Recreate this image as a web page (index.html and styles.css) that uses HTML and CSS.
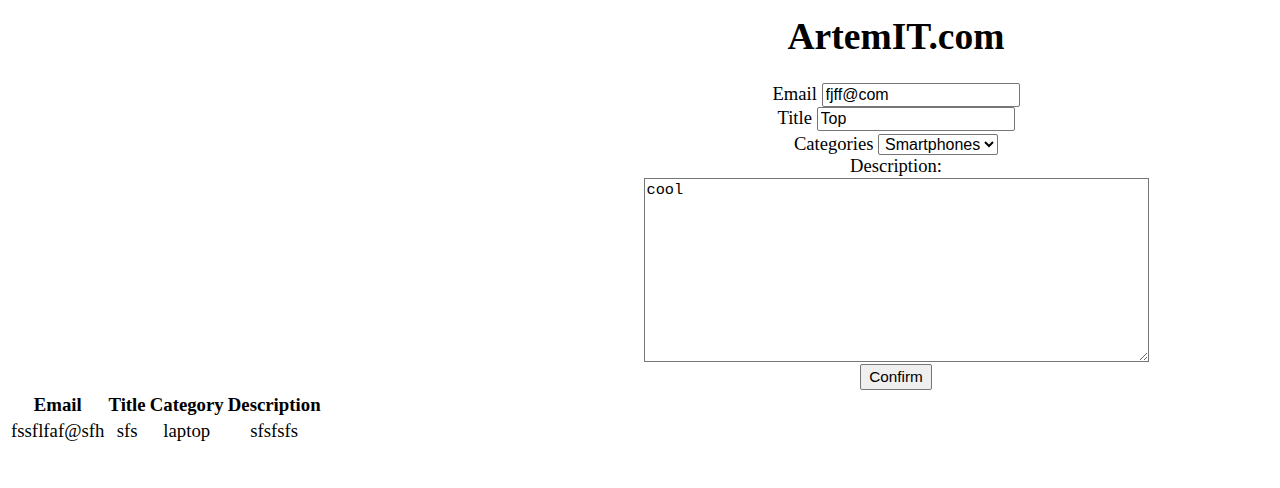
FILE: index.html
```html
<!DOCTYPE html>
<html lang="en">
<head>
  <meta charset="UTF-8">
  <title>ArtemIT.com</title>
  <link rel="stylesheet" href="styles.css">
</head>
<body>

  <div class="form-box">
    <h1>ArtemIT.com</h1>
    <form class="ad-form" onsubmit="return false">
      <div class="row">Email <input type="text" class="field" name="email" value="fjff@com"></div>
      <div class="row">Title <input type="text" class="field" name="title" value="Top"></div>
      <div class="row row-select">Categories <select class="category" name="category">
          <option>Smartphones</option>
          <option>laptop</option>
        </select></div>
      <div class="row">Description:</div>
      <textarea class="description" name="description">cool</textarea>
      <div class="row row-button"><button type="submit" class="confirm">Confirm</button></div>
    </form>
  </div>

  <table class="ads">
    <thead>
      <tr>
        <th>Email</th>
        <th>Title</th>
        <th>Category</th>
        <th>Description</th>
      </tr>
    </thead>
    <tbody>
      <tr>
        <td>fssflfaf@sfh</td>
        <td>sfs</td>
        <td>laptop</td>
        <td>sfsfsfs</td>
      </tr>
    </tbody>
  </table>

</body>
</html>
```

FILE: styles.css
```css
body {
  margin: 8px;
  font-family: "Liberation Serif", "Times New Roman", serif;
  font-size: 18.6px;
  color: #000;
  background: #fff;
}

/* Form */
.form-box {
  margin-left: 632px;
  width: 512px;
  text-align: center;
}

.form-box h1 {
  font-size: 37.5px;
  margin: 7px 0 25px 0;
}

.row {
  line-height: normal;
}

.field {
  box-sizing: border-box;
  width: 198px;
  height: 24px;
  padding: 1px 3px;
  border: 1px solid #767676;
  border-radius: 2px;
  font-family: "Liberation Sans", Arial, sans-serif;
  font-size: 16px;
  margin: 0;
}

.row-select {
  padding-top: 2px;
}

.category {
  box-sizing: border-box;
  width: 120px;
  height: 21px;
  margin: 0;
  padding: 0 0 0 2px;
  font-family: "Liberation Sans", Arial, sans-serif;
  font-size: 16px;
  border: 1px solid #767676;
  border-radius: 2px;
  background: #fff;
  color: #000;
}

.description {
  display: block;
  box-sizing: border-box;
  width: 505px;
  height: 184px;
  margin: 1px auto 0 auto;
  padding: 2px;
  border: 1px solid #767676;
  font-family: "Liberation Mono", "Courier New", monospace;
  font-size: 15.3px;
  text-align: left;
  resize: both;
}

.row-button {
  padding-top: 2px;
}

.confirm {
  box-sizing: border-box;
  width: 72px;
  height: 26px;
  margin: 0;
  padding: 1px 6px;
  font-family: "Liberation Sans", Arial, sans-serif;
  font-size: 15.3px;
  color: #000;
  background: #efefef;
  border: 1px solid #767676;
  border-radius: 2px;
}

/* Table */
.ads {
  border-spacing: 2px;
  margin-top: 1px;
  font-size: 18.8px;
}

.ads th,
.ads td {
  padding: 1px;
  text-align: center;
}
```
